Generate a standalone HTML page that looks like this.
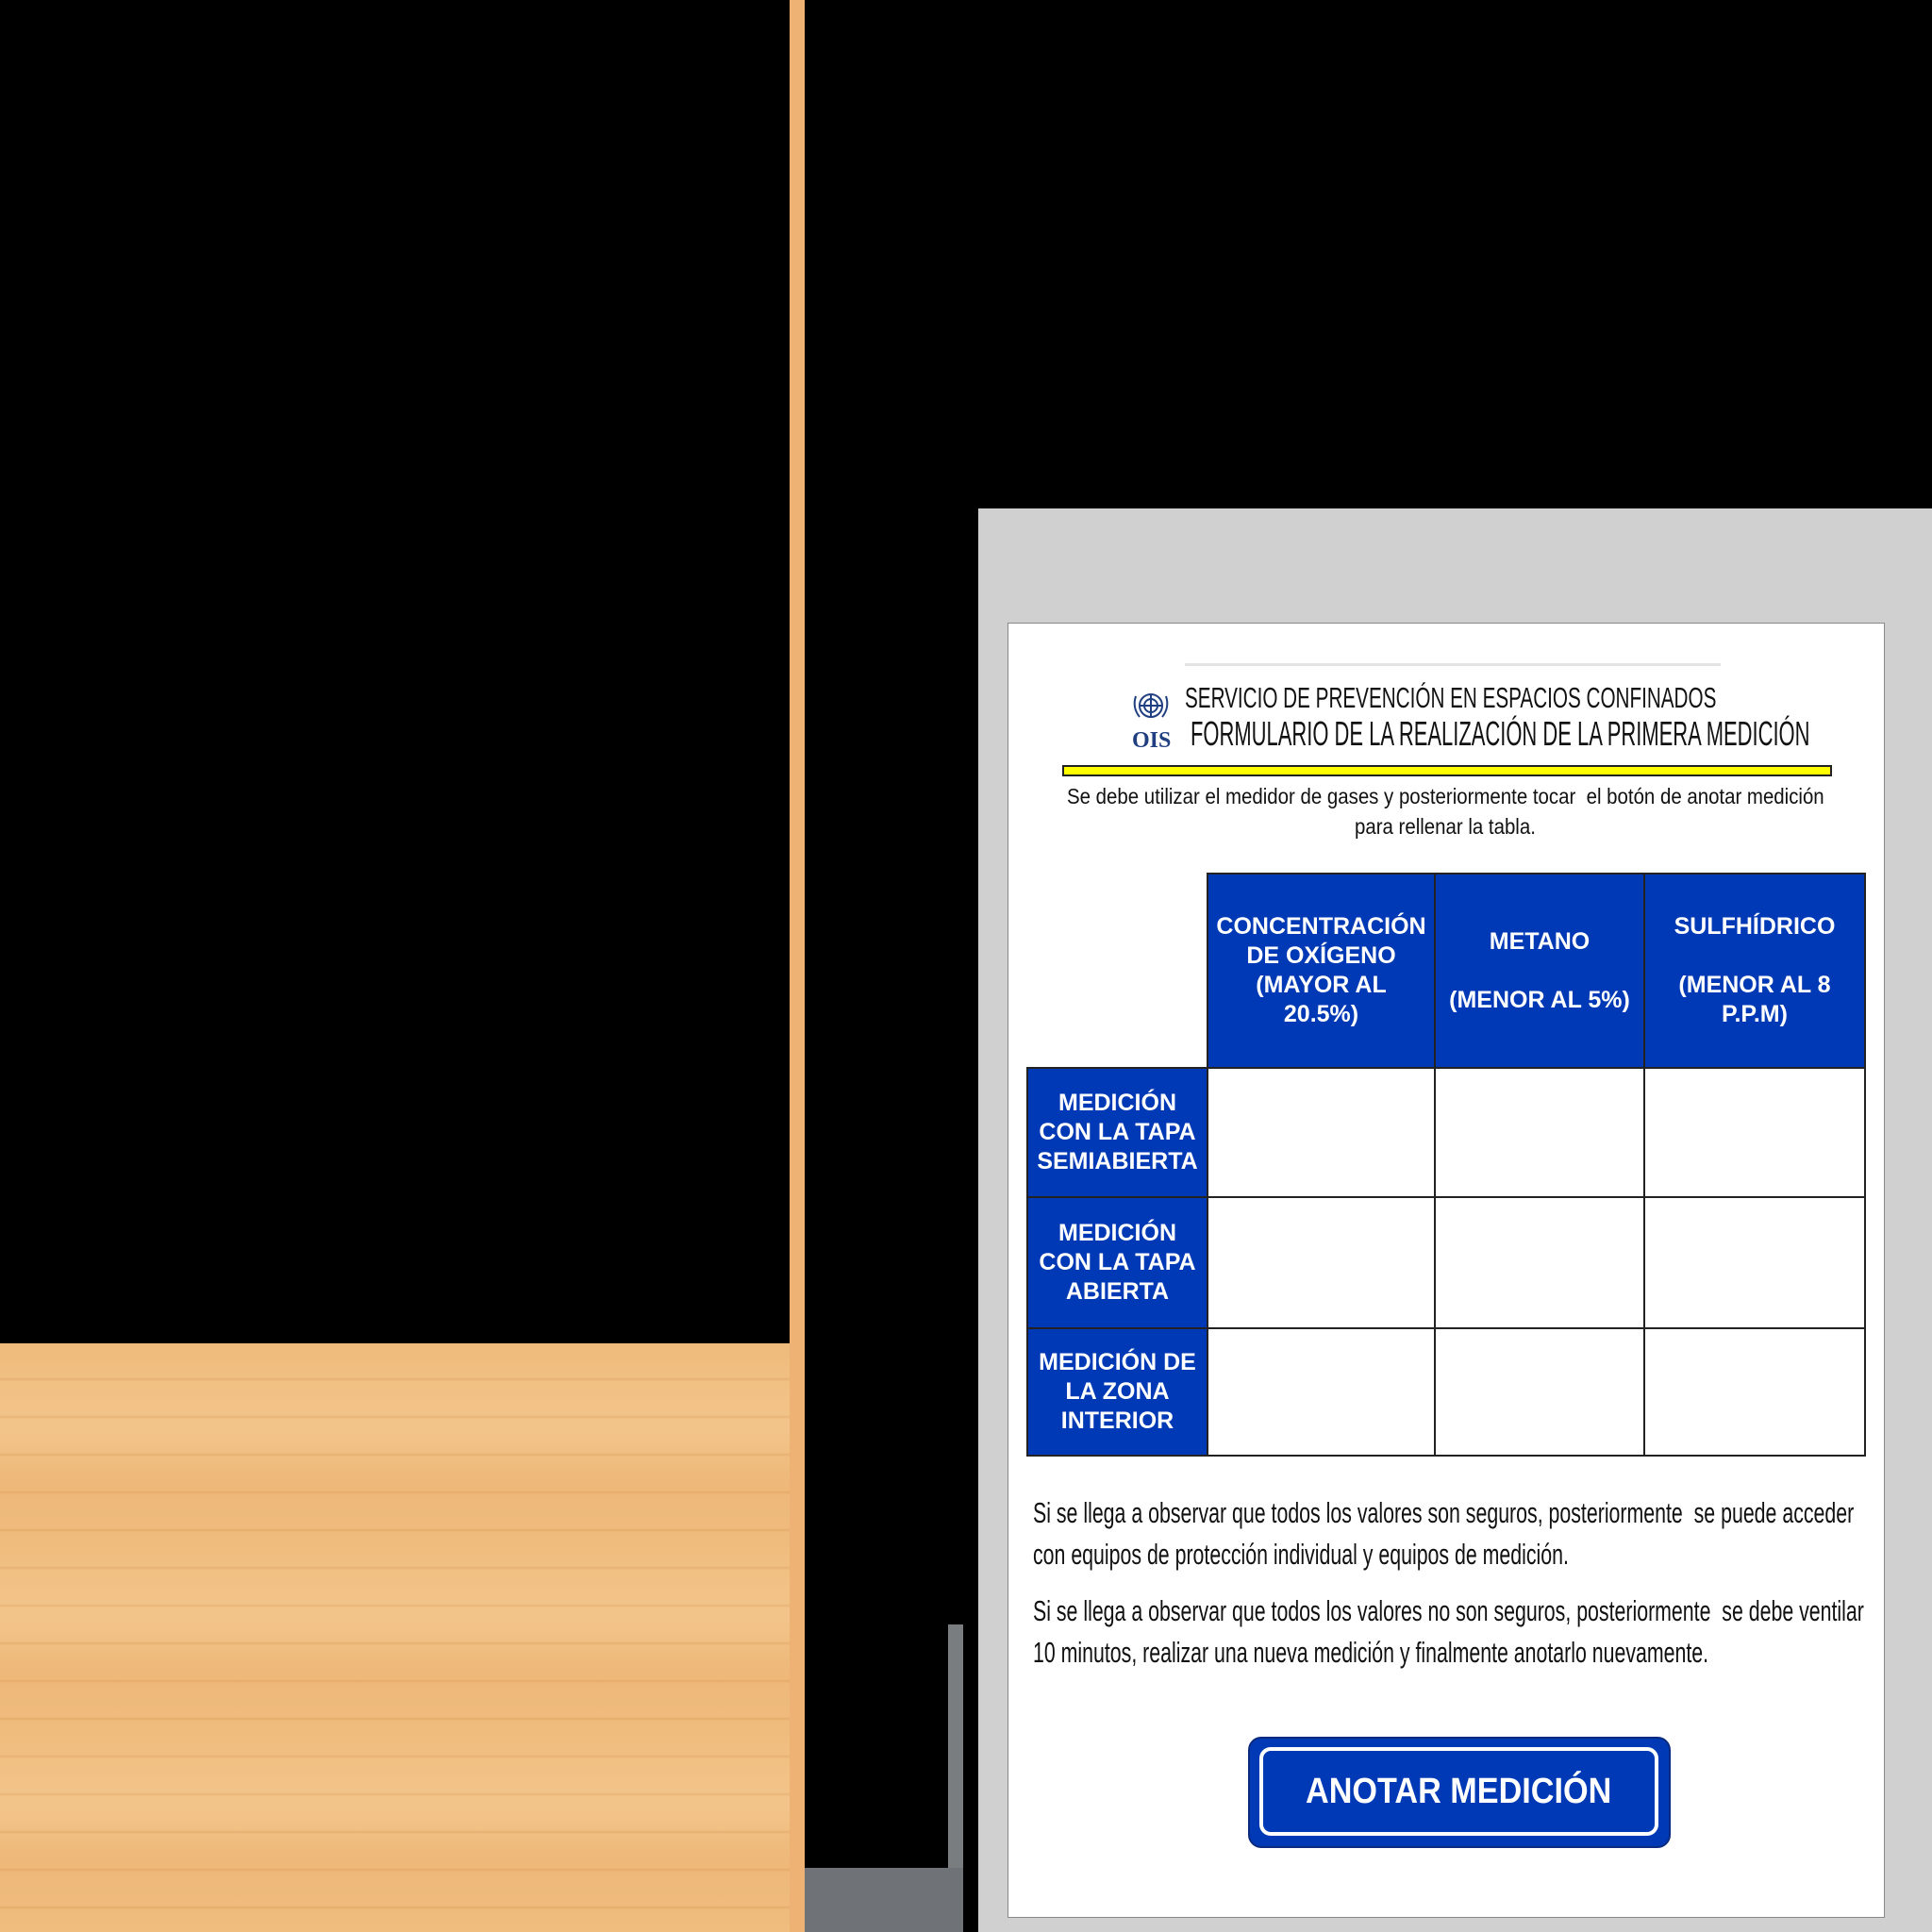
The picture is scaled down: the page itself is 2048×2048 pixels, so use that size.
<!DOCTYPE html>
<html><head><meta charset="utf-8"><style>
*{margin:0;padding:0;box-sizing:border-box}
body{width:2048px;height:2048px;background:#000;position:relative;overflow:hidden;font-family:"Liberation Sans",sans-serif}
.a{position:absolute}
.wood{background:
repeating-linear-gradient(180deg,rgba(200,120,50,0) 0,rgba(200,120,50,0) 36px,rgba(190,110,40,.18) 38px,rgba(200,120,50,0) 40px),
repeating-linear-gradient(180deg,rgba(255,225,180,0) 0,rgba(255,225,180,.25) 90px,rgba(225,160,95,.12) 150px,rgba(255,225,180,0) 200px),
#efbb7c}
.n{display:inline-block;transform-origin:left center;white-space:nowrap}
.hc{position:absolute;background:#0039b5;color:#fff;font-weight:bold;text-align:center;display:flex;align-items:center;justify-content:center;font-size:25px;line-height:31px;border:2px solid #222}
.wc{position:absolute;background:#fff;border:2px solid #222}
</style></head><body>
<div class="a wood" style="left:0;top:1424px;width:837px;height:624px"></div>
<div class="a" style="left:837px;top:0;width:16px;height:2048px;background:#eeb374"></div>
<div class="a" style="left:1005px;top:1722px;width:16px;height:326px;background:#7a7d80"></div>
<div class="a" style="left:853px;top:1980px;width:168px;height:68px;background:#6f7276"></div>
<div class="a" style="left:1037px;top:539px;width:1011px;height:1509px;background:#d0d0d0"></div>
<div class="a" style="left:1068px;top:660px;width:930px;height:1373px;background:#fff;border:1px solid #888"></div>
<div class="a" style="left:1256px;top:703px;width:568px;height:3px;background:#e4e4e4"></div>
<svg class="a" style="left:1198px;top:730px" width="50" height="64" viewBox="0 0 50 64">
<g fill="none" stroke="#1f3f80" stroke-width="2"><circle cx="22" cy="18" r="12"/><circle cx="22" cy="18" r="7"/><path d="M10 18h24M22 6v24"/><path d="M6 8q-4 12 4 22M38 8q4 12-4 22"/></g>
<text x="2" y="62" font-family="Liberation Serif" font-weight="bold" font-size="24" fill="#1f3f80">OIS</text></svg>
<div class="a" style="left:1256px;top:722px;font-size:31px;color:#111"><span class="n" style="transform:scaleX(.667)">SERVICIO DE PREVENCIÓN EN ESPACIOS CONFINADOS</span></div>
<div class="a" style="left:1262px;top:757px;font-size:36px;color:#111"><span class="n" style="transform:scaleX(.61)">FORMULARIO DE LA REALIZACIÓN DE LA PRIMERA MEDICIÓN</span></div>
<div class="a" style="left:1126px;top:811px;width:816px;height:12px;background:#ffff00;border:2px solid #222"></div>
<div class="a" style="left:1131px;top:831px;font-size:23px;color:#111"><span class="n" style="transform:scaleX(.888)">Se debe utilizar el medidor de gases y posteriormente tocar&nbsp; el botón de anotar medición</span></div>
<div class="a" style="left:1436px;top:863px;font-size:23px;color:#111"><span class="n" style="transform:scaleX(.888)">para rellenar la tabla.</span></div>
<div class="hc" style="left:1279px;top:925px;width:243px;height:208px">CONCENTRACIÓN<br>DE OXÍGENO<br>(MAYOR AL<br>20.5%)</div>
<div class="hc" style="left:1520px;top:925px;width:224px;height:208px">METANO<br><br>(MENOR AL 5%)</div>
<div class="hc" style="left:1742px;top:925px;width:236px;height:208px">SULFHÍDRICO<br><br>(MENOR AL 8<br>P.P.M)</div>
<div class="hc" style="left:1088px;top:1131px;width:193px;height:139px">MEDICIÓN<br>CON LA TAPA<br>SEMIABIERTA</div>
<div class="hc" style="left:1088px;top:1268px;width:193px;height:141px">MEDICIÓN<br>CON LA TAPA<br>ABIERTA</div>
<div class="hc" style="left:1088px;top:1407px;width:193px;height:137px">MEDICIÓN DE<br>LA ZONA<br>INTERIOR</div>
<div class="wc" style="left:1279px;top:1131px;width:243px;height:139px"></div>
<div class="wc" style="left:1520px;top:1131px;width:224px;height:139px"></div>
<div class="wc" style="left:1742px;top:1131px;width:236px;height:139px"></div>
<div class="wc" style="left:1279px;top:1268px;width:243px;height:141px"></div>
<div class="wc" style="left:1520px;top:1268px;width:224px;height:141px"></div>
<div class="wc" style="left:1742px;top:1268px;width:236px;height:141px"></div>
<div class="wc" style="left:1279px;top:1407px;width:243px;height:137px"></div>
<div class="wc" style="left:1520px;top:1407px;width:224px;height:137px"></div>
<div class="wc" style="left:1742px;top:1407px;width:236px;height:137px"></div>
<div class="a" style="left:1095px;top:1582px;font-size:31px;color:#111;line-height:44px">
<span class="n" style="transform:scaleX(.688)">Si se llega a observar que todos los valores son seguros, posteriormente&nbsp; se puede acceder</span><br>
<span class="n" style="transform:scaleX(.688)">con equipos de protección individual y equipos de medición.</span></div>
<div class="a" style="left:1095px;top:1686px;font-size:31px;color:#111;line-height:44px">
<span class="n" style="transform:scaleX(.688)">Si se llega a observar que todos los valores no son seguros, posteriormente&nbsp; se debe ventilar</span><br>
<span class="n" style="transform:scaleX(.688)">10 minutos, realizar una nueva medición y finalmente anotarlo nuevamente.</span></div>
<div class="a" style="left:1323px;top:1841px;width:448px;height:118px;background:#0039b5;border-radius:14px;border:2px solid #0a2a80"></div>
<div class="a" style="left:1335px;top:1852px;width:423px;height:94px;border:4px solid #fff;border-radius:12px;display:flex;align-items:center;justify-content:center;color:#fff;font-weight:bold;font-size:38px"><span style="display:inline-block;transform:scaleX(.9)">ANOTAR MEDICIÓN</span></div>
</body></html>
